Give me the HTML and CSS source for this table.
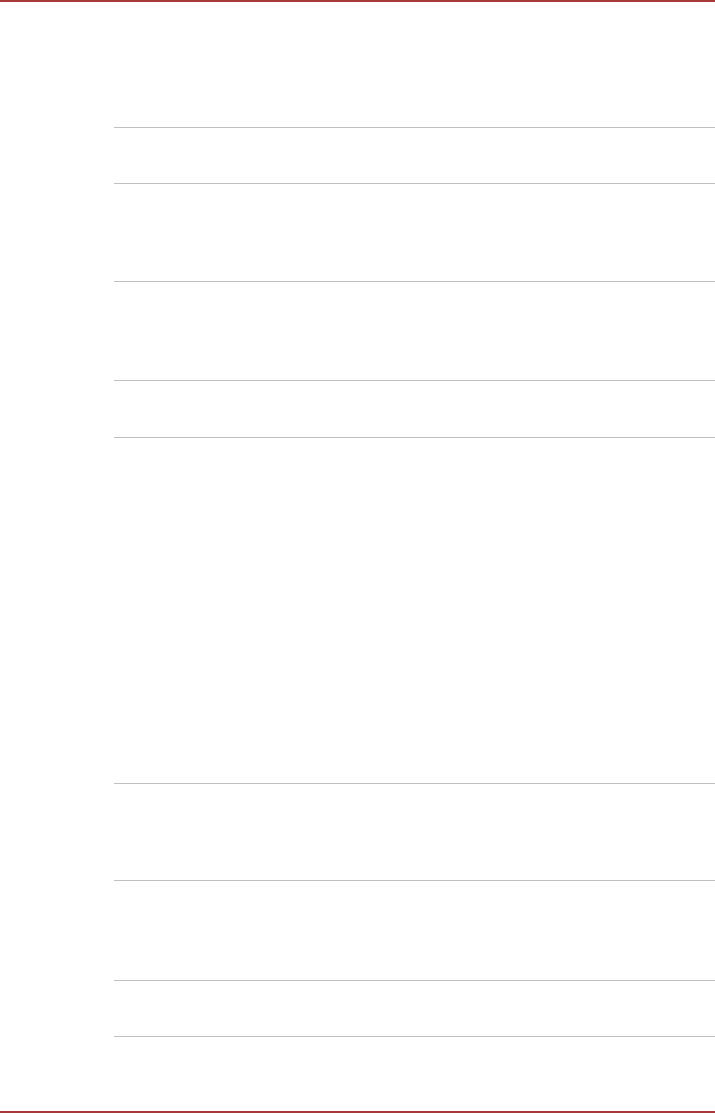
FILE: index.html
```html
<!DOCTYPE html>
<html lang="en">
<head>
    <meta charset="UTF-8">
    <meta name="viewport" content="width=device-width, initial-scale=1.0">
    <title>Page</title>
    <link rel="stylesheet" href="styles.css">
</head>
<body>
    <div class="page">
        <div class="rule"></div>
        <div class="content">
            <div class="table">
                <div class="row h56"></div>
                <div class="row h98"></div>
                <div class="row h99"></div>
                <div class="row h57"></div>
                <div class="row h346"></div>
                <div class="row h97"></div>
                <div class="row h100"></div>
                <div class="row h56 last"></div>
            </div>
        </div>
        <div class="rule bottom"></div>
    </div>
</body>
</html>
```
FILE: styles.css
```css
body {
    font-family: "Liberation Sans", Arial, sans-serif;
    margin: 0;
    padding: 0;
    background-color: #fff;
}
.page {
    display: flex;
    flex-direction: column;
    height: 1113px;
}
.rule {
    height: 2px;
    background-color: #a83a3a;
    flex-shrink: 0;
}
.rule.bottom {
    margin-top: auto;
}
.content {
    padding-top: 125px;
    padding-left: 114px;
}
.row {
    border-top: 1px solid #c0c0c0;
    box-sizing: border-box;
}
.row.last {
    border-bottom: 1px solid #c0c0c0;
}
.h56 { height: 56px; }
.h57 { height: 57px; }
.h97 { height: 97px; }
.h98 { height: 98px; }
.h99 { height: 99px; }
.h100 { height: 100px; }
.h346 { height: 346px; }
.row.last.h56 { height: 57px; }
```
